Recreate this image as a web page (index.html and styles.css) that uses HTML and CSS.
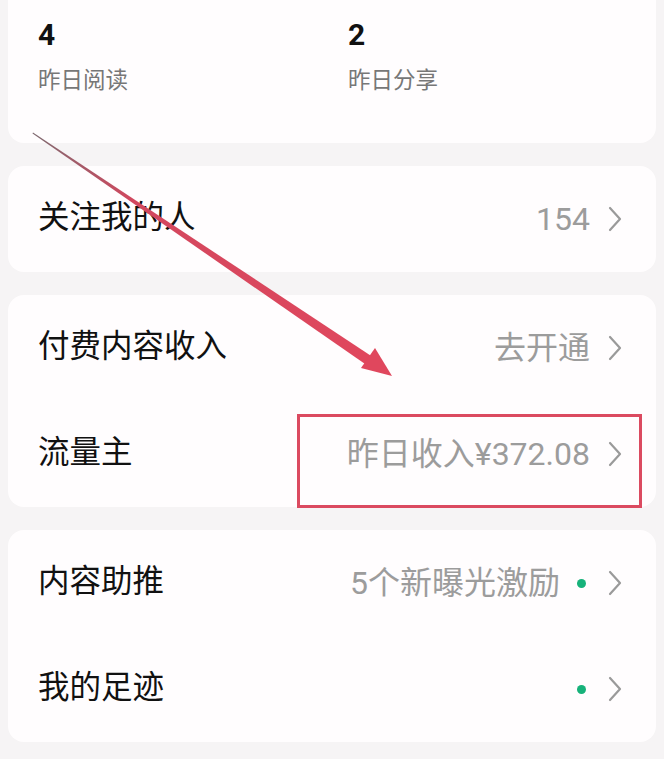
FILE: index.html
```html
<!DOCTYPE html>
<html lang="zh-CN">
<head>
    <meta charset="UTF-8">
    <meta name="viewport" content="width=device-width, initial-scale=1.0">
    <title>创作中心</title>
    <link rel="stylesheet" href="styles.css">
</head>
<body>
    <div class="page">
        <!-- 昨日数据 -->
        <section class="card stats">
            <div class="stat">
                <div class="stat-num">4</div>
                <div class="stat-label">昨日阅读</div>
            </div>
            <div class="stat">
                <div class="stat-num">2</div>
                <div class="stat-label">昨日分享</div>
            </div>
        </section>

        <section class="card">
            <div class="row">
                <span class="row-title">关注我的人</span>
                <span class="row-right">
                    <span class="row-value">154</span>
                    <svg class="chevron" viewBox="0 0 14 26"><polyline points="2,2 12,13 2,24"/></svg>
                </span>
            </div>
        </section>

        <section class="card">
            <div class="row">
                <span class="row-title">付费内容收入</span>
                <span class="row-right">
                    <span class="row-value">去开通</span>
                    <svg class="chevron" viewBox="0 0 14 26"><polyline points="2,2 12,13 2,24"/></svg>
                </span>
            </div>
            <div class="row">
                <span class="row-title">流量主</span>
                <span class="row-right">
                    <span class="row-value">昨日收入¥372.08</span>
                    <svg class="chevron" viewBox="0 0 14 26"><polyline points="2,2 12,13 2,24"/></svg>
                </span>
            </div>
        </section>

        <section class="card">
            <div class="row">
                <span class="row-title">内容助推</span>
                <span class="row-right">
                    <span class="row-value">5个新曝光激励</span>
                    <span class="dot"></span>
                    <svg class="chevron" viewBox="0 0 14 26"><polyline points="2,2 12,13 2,24"/></svg>
                </span>
            </div>
            <div class="row">
                <span class="row-title">我的足迹</span>
                <span class="row-right">
                    <span class="dot"></span>
                    <svg class="chevron" viewBox="0 0 14 26"><polyline points="2,2 12,13 2,24"/></svg>
                </span>
            </div>
        </section>
    </div>

    <!-- 标注：箭头和红框 -->
    <svg class="marks" viewBox="0 0 664 759">
        <defs>
            <linearGradient id="shaft" x1="33" y1="133" x2="370" y2="358" gradientUnits="userSpaceOnUse">
                <stop offset="0" stop-color="#7d6a70"/>
                <stop offset="0.3" stop-color="#d2475e"/>
                <stop offset="1" stop-color="#e0475d"/>
            </linearGradient>
        </defs>
        <polygon points="33,132.5 372,356.5 366.5,365 32.5,133.5" fill="url(#shaft)"/>
        <polygon points="392,376 375,348 361,368" fill="#e0475d"/>
        <rect x="298.5" y="415.5" width="342" height="91" fill="none" stroke="#db4a60" stroke-width="3"/>
    </svg>
</body>
</html>
```

FILE: styles.css
```css
* {
    margin: 0;
    padding: 0;
    box-sizing: border-box;
}

body {
    background: #f6f4f5;
    font-family: Roboto, "Noto Sans CJK SC", sans-serif;
    color: #111;
}

.page {
    padding: 0 8px 20px;
    display: flex;
    flex-direction: column;
    gap: 23px;
}

.card {
    background: #fffdfe;
    border-radius: 16px;
    padding: 0 34px 0 30px;
}

/* 昨日数据 */
.stats {
    display: grid;
    grid-template-columns: 310px 1fr;
    height: 143px;
    padding-top: 17px;
    border-radius: 0 0 16px 16px;
}

.stat-num {
    font-size: 30px;
    font-weight: bold;
    line-height: 36px;
}

.stat-label {
    margin-top: 12px;
    font-size: 22.5px;
    line-height: 30px;
    color: #777;
}

/* 列表行 */
.row {
    height: 106px;
    display: flex;
    justify-content: space-between;
    align-items: center;
}

.row-title {
    font-size: 31.5px;
    line-height: 40px;
    margin-top: -3px;
}

.row-right {
    display: flex;
    align-items: center;
}

.row-value {
    font-size: 32px;
    line-height: 40px;
    color: #9c9c9c;
    margin-right: 18px;
}

.dot {
    width: 9px;
    height: 9px;
    border-radius: 50%;
    background: #17b27a;
    margin-right: 22px;
}

.row-value + .dot {
    margin-left: -1px;
}

.chevron {
    width: 14px;
    height: 26px;
    fill: none;
    stroke: #9a9a9a;
    stroke-width: 2.2;
    stroke-linecap: round;
    stroke-linejoin: round;
}

.marks {
    position: absolute;
    top: 0;
    left: 0;
    width: 664px;
    height: 759px;
    pointer-events: none;
}
```
